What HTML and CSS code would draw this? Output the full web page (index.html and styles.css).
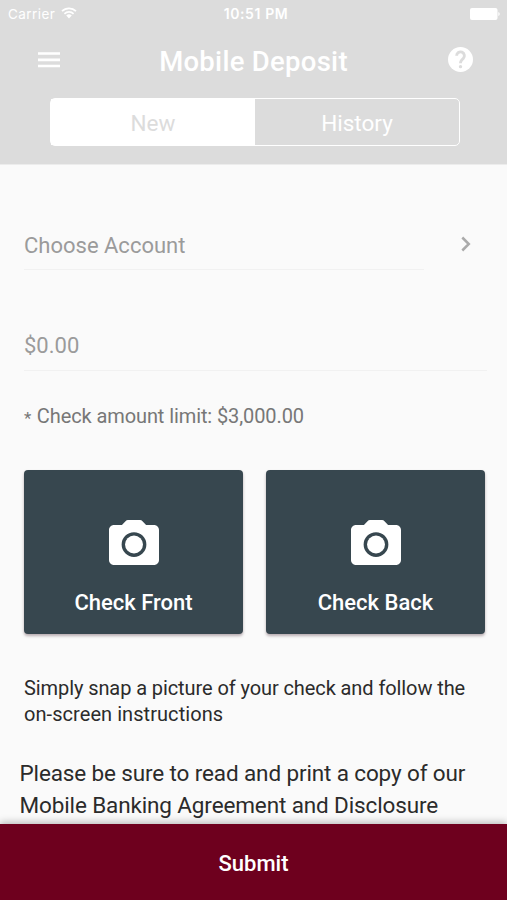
FILE: index.html
```html
<!DOCTYPE html>
<html lang="en">
<head>
<meta charset="utf-8">
<title>Mobile Deposit</title>
<link rel="stylesheet" href="styles.css">
</head>
<body>
<div class="screen">
  <header class="header">
    <div class="status">
      <div class="carrier"><span>Carrier</span>
        <svg class="wifi" viewBox="0 0 16 12"><path d="M1 4.2a10 10 0 0 1 14 0M3.4 6.8a6.6 6.6 0 0 1 9.2 0" fill="none" stroke="currentColor" stroke-width="1.7"/><path d="M5.2 8.6a4 4 0 0 1 5.6 0L8 11.4z" fill="currentColor"/></svg>
      </div>
      <div class="clock">10:51 PM</div>
      <div class="power"><svg class="battery" viewBox="0 0 30 12"><rect width="27.5" height="12" rx="2" fill="currentColor"/><path d="M28.3 4a2.1 2.1 0 0 1 0 4z" fill="currentColor"/></svg></div>
    </div>
    <div class="titlebar">
      <svg class="menu" viewBox="0 0 24 16"><path d="M1 1.5h22M1 7.8h22M1 14h22" stroke="currentColor" stroke-width="2.7"/></svg>
      <h1 class="title">Mobile Deposit</h1>
      <svg class="help" viewBox="2 2 20 20"><circle cx="12" cy="12" r="10" fill="currentColor"/><path class="mark" d="M8.900 9a3.100 3.100 0 1 1 5.300 2.200l-1.200 1.200Q12 13.400 12 15"/><circle class="dot" cx="12" cy="17.700" r="1.350"/></svg>
    </div>
    <div class="tabs"><div class="tab tab-active">New</div><div class="tab">History</div></div>
  </header>
  <main class="content">
    <div class="field-row">
      <div class="field account">Choose Account</div>
      <svg class="chevron" viewBox="0 0 10 16"><path d="M1.300 1.500 7.800 8l-6.500 6.500" fill="none" stroke="currentColor" stroke-width="2.500"/></svg>
    </div>
    <div class="field amount">$0.00</div>
    <p class="limit"><span class="star">*</span> Check amount limit: $3,000.00</p>
    <div class="cards">
      <div class="card">
        <svg class="camera" viewBox="0 0 24 24"><path fill="currentColor" fill-rule="evenodd" d="M9.600 2Q9 2 8.600 2.450L7.170 4H4c-1.100 0-2 .9-2 2v12c0 1.100.9 2 2 2h16c1.100 0 2-.9 2-2V6c0-1.100-.9-2-2-2h-3.170L15.400 2.450Q15 2 14.400 2zM12 16.750a4.950 4.950 0 1 1 0-9.900 4.950 4.950 0 0 1 0 9.900z"/><circle cx="12" cy="11.800" r="3.600" fill="currentColor"/></svg>
        <span>Check Front</span>
      </div>
      <div class="card">
        <svg class="camera" viewBox="0 0 24 24"><path fill="currentColor" fill-rule="evenodd" d="M9.600 2Q9 2 8.600 2.450L7.170 4H4c-1.100 0-2 .9-2 2v12c0 1.100.9 2 2 2h16c1.100 0 2-.9 2-2V6c0-1.100-.9-2-2-2h-3.170L15.400 2.450Q15 2 14.400 2zM12 16.750a4.950 4.950 0 1 1 0-9.900 4.950 4.950 0 0 1 0 9.900z"/><circle cx="12" cy="11.800" r="3.600" fill="currentColor"/></svg>
        <span>Check Back</span>
      </div>
    </div>
    <p class="hint">Simply snap a picture of your check and follow the<br><span class="hint-end">on-screen instructions</span></p>
    <p class="notice">Please be sure to read and print a copy of our<br>Mobile Banking Agreement and Disclosure</p>
  </main>
  <div class="submit">Submit</div>
</div>
</body>
</html>
```
FILE: styles.css
```css
* { box-sizing: border-box; margin: 0; }
body { font-family: Roboto, "Liberation Sans", sans-serif; background: #fafafa; }
svg { display: block; flex: none; }
.screen { width: 507px; height: 900px; display: flex; flex-direction: column; overflow: hidden; background: #fafafa; }
.header { height: 165px; flex: none; background: #dcdcdc; color: #fff; border-bottom: 1px solid #ececec; }
.status { height: 28px; padding: 0 7px 0 8px; display: grid; grid-template-columns: 1fr auto 1fr; align-items: center; font-family: Inter, sans-serif; font-size: 13.5px; line-height: 28px; }
.carrier { display: flex; align-items: center; gap: 6px; letter-spacing: .45px; }
.wifi { width: 16px; height: 12px; margin-top: -3px; }
.clock { font-weight: 600; font-size: 14px; letter-spacing: .6px; margin-left: 4px; }
.power { display: flex; justify-content: flex-end; }
.battery { width: 30px; height: 12px; }
.titlebar { height: 70px; padding: 0 34px 7px 37px; display: flex; align-items: center; justify-content: space-between; }
.menu { width: 24px; height: 16px; }
.title { font-size: 27.5px; font-weight: 500; line-height: 36px; letter-spacing: .28px; padding-top: 5px; margin-right: 2px; }
.help { width: 25px; height: 25px; }
.mark { fill: none; stroke: #dcdcdc; stroke-width: 2.3; }
.dot { fill: #dcdcdc; }
.tabs { width: 410px; height: 48px; margin-left: 50px; display: flex; border: 1.500px solid #fff; border-radius: 5px; }
.tab { flex: 1; text-align: center; font-size: 22.5px; line-height: 48px; letter-spacing: 0; }
.tab-active { background: #fff; color: #dcdcdc; }
.content { padding: 0 20px 0 24px; height: 659px; overflow: hidden; flex: none; }
.field-row { display: flex; padding-top: 55px; }
.field { font-size: 22px; line-height: 50px; height: 50px; color: #9b9b9b; border-bottom: 1px solid #f1f1f1; }
.account { width: 400px; line-height: 52px; }
.chevron { width: 10px; height: 16px; margin: 16px 0 0 37px; color: #aaa; }
.amount { margin-top: 51px; }
.limit { margin-top: 32px; font-size: 20px; line-height: 26px; letter-spacing: -.1px; color: #777; }
.star { display: inline-block; width: 8px; font-size: 17px; line-height: 20px; vertical-align: -1px; }
.cards { display: flex; gap: 23px; margin-top: 41px; }
.card { width: 219px; height: 164px; padding-top: 45px; display: flex; flex-direction: column; align-items: center; border-radius: 4px; background: #37474f; box-shadow: 0 2px 3px rgba(60, 30, 40, .35); color: #fff; font-size: 22px; font-weight: 500; line-height: 28px; }
.camera { width: 60px; height: 60px; margin-bottom: 14px; }
.hint { margin-top: 41px; font-size: 20px; line-height: 26px; letter-spacing: -.09px; color: #2b2b2b; white-space: nowrap; }
.hint-end { letter-spacing: .06px; }
.notice { margin: 31px 0 0 -4.500px; font-size: 22.5px; line-height: 31.700px; letter-spacing: -.13px; color: #2b2b2b; white-space: nowrap; }
.submit { height: 76px; flex: none; background: #6e001e; color: #fff; text-align: center; font-size: 22px; font-weight: 500; line-height: 80px; box-shadow: 0 -2px 7px rgba(0, 0, 0, .25); position: relative; }
```
